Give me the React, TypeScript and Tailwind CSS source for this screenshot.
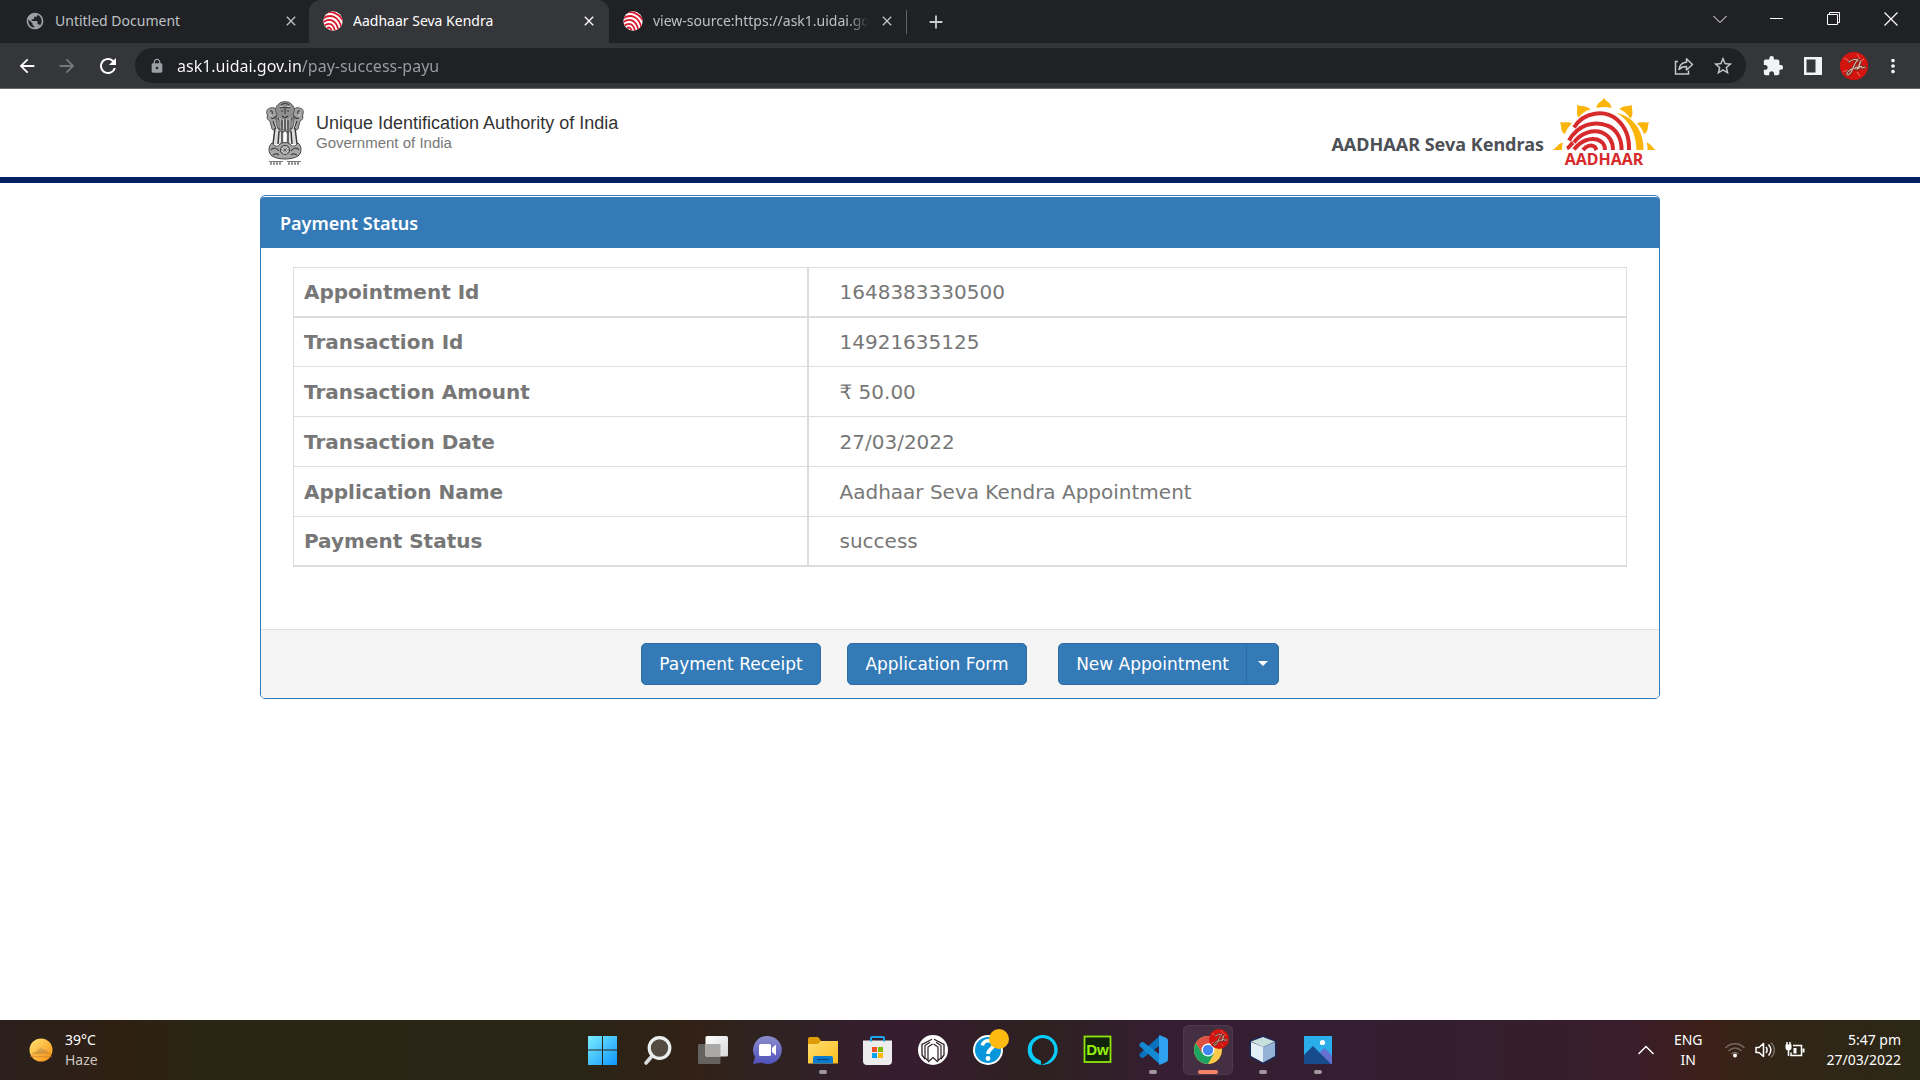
import type { ReactNode } from "react";
import {
  MdAdd,
  MdArrowBack,
  MdArrowForward,
  MdClose,
  MdExtension,
  MdLock,
  MdMoreVert,
  MdPublic,
  MdRefresh,
  MdStarBorder,
} from "react-icons/md";

function AadhaarFavicon() {
  return (
    <svg viewBox="0 0 20 20" className="size-5 shrink-0" aria-hidden="true">
      <defs>
        <clipPath id="fav-clip">
          <circle cx="10" cy="10" r="9.7" />
        </clipPath>
      </defs>
      <g clipPath="url(#fav-clip)">
        <rect width="20" height="20" fill="#fff" />
        <g fill="none" stroke="#d9172b" strokeWidth="1.8">
          <path d="M0 3.5C8-2 18 3 21 12" />
          <path d="M0 7.5C8 2 16 6 18.5 17" />
          <path d="M0 11.2C7 6.5 13 9 15.5 19" />
          <path d="M1.500 14.500C6 11 10.500 13 12 20" />
          <path d="M4 17.500C6 15.500 8 16.500 8.800 20" />
        </g>
      </g>
    </svg>
  );
}

function Tab({ icon, title, active = false, wide = true }: { icon: ReactNode; title: string; active?: boolean; wide?: boolean }) {
  return (
    <div
      className={
        "flex h-full items-center rounded-t-xl pb-0.5 pl-3.5 " +
        (active ? "bg-[#35363a] text-white " : "bg-[#202124] text-[#bdc1c6] ") +
        (wide ? "w-[300px] pr-3" : "w-[290px] pr-1")
      }
    >
      {icon}
      <button
        className={
          "ml-2.5 min-w-0 flex-1 overflow-hidden text-left text-[14px] leading-5 whitespace-nowrap " +
          (wide ? "" : "[mask-image:linear-gradient(to_right,black_90%,transparent)]")
        }
      >
        {title}
      </button>
      <button aria-label={"Close " + title} className="ml-2.5 shrink-0">
        <MdClose className="size-4" />
      </button>
    </div>
  );
}

function BrowserChrome() {
  return (
    <div className="shrink-0 font-['Noto_Sans',sans-serif]">
      <div className="flex h-[43px] justify-between bg-[#35363a]">
        <div className="flex">
          <div className="flex rounded-br-xl bg-[#202124] pl-[11px]">
            <div className="w-[298px]">
              <Tab icon={<MdPublic className="size-5 shrink-0 text-[#9aa0a6]" />} title="Untitled Document" />
            </div>
          </div>
          <div className="bg-[#202124]">
            <div className="h-full w-[300px] rounded-t-xl bg-[#35363a]">
              <Tab icon={<AadhaarFavicon />} title="Aadhaar Seva Kendra" active />
            </div>
          </div>
        </div>
        <div className="flex flex-1 items-center justify-between rounded-bl-xl bg-[#202124]">
          <div className="flex h-full items-center">
            <Tab icon={<AadhaarFavicon />} title="view-source:https://ask1.uidai.gov" wide={false} />
            <span className="ml-[7px] h-6 w-px bg-[#5f6368]" />
            <button aria-label="New tab" className="ml-[18px] text-[#c8cacd]">
              <MdAdd className="size-[22px]" />
            </button>
          </div>
          <div className="flex items-center gap-[43px] pr-[22px] pb-1.5 text-white">
            <button aria-label="Search tabs">
              <svg viewBox="0 0 14 14" className="size-3.5" fill="none" stroke="currentColor">
                <path d="M.5 4 7 10.500 13.500 4" />
              </svg>
            </button>
            <button aria-label="Minimize">
              <svg viewBox="0 0 14 14" className="size-3.5" fill="none" stroke="currentColor">
                <path d="M0 6.500h13" />
              </svg>
            </button>
            <button aria-label="Restore">
              <svg viewBox="0 0 14 14" className="size-3.5" fill="none" stroke="currentColor">
                <path d="M.5 2.500h10v10H.5zM2.500 2.500v-2h10v10h-2" />
              </svg>
            </button>
            <button aria-label="Close window">
              <svg viewBox="0 0 14 14" className="size-3.5" fill="none" stroke="currentColor" strokeWidth="1.200">
                <path d="M.5.500l13 13M13.500.500l-13 13" />
              </svg>
            </button>
          </div>
        </div>
      </div>
      <div className="flex h-[46px] items-center border-b border-[#66676a] bg-[#35363a] pr-4 pl-4">
        <button aria-label="Back" className="text-white">
          <MdArrowBack className="size-[22px]" />
        </button>
        <button aria-label="Forward" className="ml-[18px] text-[#77787c]">
          <MdArrowForward className="size-[22px]" />
        </button>
        <button aria-label="Reload" className="ml-[18px] text-white">
          <MdRefresh className="size-6" />
        </button>
        <div className="ml-[15px] flex h-[35px] flex-1 items-center rounded-full bg-[#202124] pr-3 pl-[14px]">
          <MdLock className="size-4 text-[#9aa0a6]" />
          <input
            aria-label="Address"
            defaultValue="ask1.uidai.gov.in/pay-success-payu"
            className="ml-3 min-w-0 flex-1 bg-[linear-gradient(to_right,white_125px,#9aa0a6_125px)] bg-clip-text text-[16px] leading-6 text-transparent outline-none"
          />
          <button aria-label="Share" className="text-[#c4c7c5]">
            <svg viewBox="0 0 20 20" className="size-5" fill="none" stroke="currentColor" strokeWidth="1.500">
              <path d="M4 5.500H1.500v12.500h13v-3.500" />
              <path d="M5 13.500c.6-4.500 3.400-7 7.500-7.200V2.800l6 5.700-6 5.500v-3.400c-3.200 0-5.600.8-7.500 2.900z" strokeLinejoin="round" />
            </svg>
          </button>
          <button aria-label="Bookmark" className="ml-[18px] text-[#c4c7c5]">
            <MdStarBorder className="size-[22px]" />
          </button>
        </div>
        <button aria-label="Extensions" className="ml-4 text-[#f1f3f4]">
          <MdExtension className="size-[22px]" />
        </button>
        <button aria-label="Side panel" className="ml-5 text-[#f1f3f4]">
          <svg viewBox="0 0 18 18" className="size-[18px]">
            <path fill="currentColor" fillRule="evenodd" d="M0 0h18v18H0zM2.500 2.500v13h9v-13z" />
          </svg>
        </button>
        <button aria-label="Profile" className="ml-[18px]">
          <Avatar className="size-7" />
        </button>
        <button aria-label="Menu" className="ml-[14px] text-[#f1f3f4]">
          <MdMoreVert className="size-[22px]" />
        </button>
      </div>
    </div>
  );
}

function Avatar({ className }: { className: string }) {
  return (
    <svg viewBox="0 0 28 28" className={className} aria-hidden="true">
      <circle cx="14" cy="14" r="14" fill="#d4140f" />
      <g stroke="#f08078" strokeWidth="1.200" opacity=".7">
        <path d="M4 6l5 3M17 2l3 5M24 7l-5 3M3 20l5-2M20 24l-3-4M26 16l-5-1" />
      </g>
      <g fill="none" stroke="#5d2a22" strokeWidth="2.600" strokeLinecap="round">
        <path d="M9 10c3-3 7-3 9-2-5 3-5 14-10 15-3 0 0-5 6-7" />
        <path d="M15 17c1-3 3-2 2 0 1 1 2-6 4-8-2 4-2 7-2 7 2-3 3-1 3 0l3-1" />
      </g>
      <g fill="none" stroke="#e0b7a6" strokeWidth="1.100" strokeLinecap="round">
        <path d="M9 10c3-3 7-3 9-2-5 3-5 14-10 15-3 0 0-5 6-7" />
        <path d="M15 17c1-3 3-2 2 0 1 1 2-6 4-8-2 4-2 7-2 7 2-3 3-1 3 0l3-1" />
      </g>
    </svg>
  );
}

function Emblem() {
  return (
    <svg viewBox="0 0 38 66" className="h-[66px] w-[38px] shrink-0" aria-label="State emblem of India" role="img">
      <g fill="#a2a2a2" stroke="#555" strokeWidth="1">
        <path d="M5 8C1 8-.5 12 1.500 15c-1 3 0 5 2.500 6l2 8 5 3 3-14-3-8C9 8 7 7 5 8z" />
        <path d="M33 8c4 0 5.500 4 3.500 7 1 3 0 5-2.500 6l-2 8-5 3-3-14 3-8c2-2 4-3 6-2z" />
        <path d="M9 20h20l2 24H7z" fill="#dedede" stroke="none" />
        <path d="M13 4c1-3 11-3 12 0 4 2 4 8 2 10 2 5 1 12-2 16-3 3-9 3-12 0-3-4-4-11-2-16-2-2-2-8 2-10z" fill="#8f8f8f" />
      </g>
      <g fill="none" stroke="#3a3a3a" strokeWidth="1.100">
        <path d="M14 8c2-2 3 0 5 0s3-2 5 0M15 11h2M21 11h2M19 9v5M16 16c2 2 4 2 6 0M15 5c2-2 6-2 8 0" />
        <path d="M12 18c2 3 2 8 1 11M16 20v10M19 19v12M22 20v10M26 18c-2 3-2 8-1 11" />
        <path d="M4 11c2-1 3 1 2 3M34 11c-2-1-3 1-2 3M5 18c2 1 4 0 5-2M33 18c-2 1-4 0-5-2M7 21l3 8M31 21l-3 8" />
        <path d="M9 28l-2 16M13 31l-1 13M16 31v13M22 31v13M25 31l1 13M29 28l2 16" strokeWidth="1.500" />
      </g>
      <g fill="none" stroke="#d4d4d4" strokeWidth=".9">
        <path d="M14 18v10M17.500 19v10M20.500 19v10M24 18v10M14 6.500h3M21 6.500h3M3 14l3 2M35 14l-3 2" />
      </g>
      <path d="M18 32h2v11h-2z" fill="#fff" />
      <path d="M6 43c-4 3-4 10 0 13 6 4 20 4 26 0 4-3 4-10 0-13-3 4-6 4-8 1-3-2-7-2-10 0-2 3-5 3-8-1z" fill="#a6a6a6" stroke="#444" strokeWidth="1" />
      <g fill="none" stroke="#444" strokeWidth="1.200">
        <circle cx="19" cy="50" r="4.500" fill="#dadada" />
        <path d="M19 46v8M15 50h8M16 47l6 6M22 47l-6 6" strokeWidth=".6" />
        <path d="M5 50c2-3 6-2 8 1M33 50c-2-3-6-2-8 1M7 55c3-2 5-1 6 0M31 55c-3-2-5-1-6 0" />
      </g>
      <path d="M3 61.500h14M21 61.500h14" stroke="#666" strokeWidth=".9" />
      <path d="M4 63.500h12M22 63.500h12" stroke="#888" strokeWidth="2.500" strokeDasharray="2 1" />
    </svg>
  );
}

function AadhaarLogo() {
  return (
    <svg viewBox="0 0 104 68" className="h-[68px] w-[104px] shrink-0 overflow-visible" aria-label="Aadhaar" role="img">
      <g fill="#fbb40a">
        <path d="M52 -1c2 4 7 4 7.500 10-5-1.500-10-1.500-15 0C45 3 50 3 52 -1z" />
        <path d="M25 6c5 2 9 0 13.500 4.500-5 1-9 4-12 8C23.500 14 26 11 25 6z" />
        <path d="M80 6c-5 2-8 0-12.500 4 4 2 8 5 11 9.500C82.500 14 79 11 80 6z" />
        <path d="M8 23c5 1.500 7-1 12 1.500-3.500 3-5.500 6-7 10.500C8 32.500 10 28 8 23z" />
        <path d="M97 23c-5 1.500-7-1-12 1.500 3.500 3 5.500 6 7 10.500 5-2.500 3-7 5-12z" />
        <path d="M0 51c5-1.500 5-6 11-7.500-1 2.500-1 5-1 7.500z" />
        <path d="M104 51c-4-2-4-6-9.500-7.500 1 2.500 1 5 1 7.500z" />
        <path d="M65 14c16 3 27 18 26.500 37h-7C84 35 78 22 65 14z" />
      </g>
      <g fill="none" stroke="#d62a2c" strokeWidth="4">
        <path d="M22 28.500c10-16 31-18 43-8 8 7 12.500 18 12 30.500" />
        <path d="M17 41.500c9-16 25-20 38-15 9 3 15 13 14.500 24.500" />
        <path d="M22 43.500c7-10 19-13 28-10 7 3 11 9 11 17.500" />
        <path d="M15 49.500c2-1 4-4 6-6M22 50.500c7-9 16-12 23-10 6 2 8 5 8 10.500" />
        <path d="M31 51c3-4 8-6 12-3l1.500 3" />
      </g>
      <text x="52" y="66" textAnchor="middle" className="fill-[#d62a2c] font-['Noto_Sans',sans-serif] text-[16px] font-bold">
        AADHAAR
      </text>
    </svg>
  );
}

const details = [
  { label: "Appointment Id", value: "1648383330500" },
  { label: "Transaction Id", value: "14921635125" },
  { label: "Transaction Amount", value: "₹ 50.00" },
  { label: "Transaction Date", value: "27/03/2022" },
  { label: "Application Name", value: "Aadhaar Seva Kendra Appointment" },
  { label: "Payment Status", value: "success" },
];

function rowClass(i: number) {
  if (i === 0) return "h-[49px] border-b-2 border-[#ddd]";
  if (i === details.length - 1) return "h-[49px]";
  return "h-[50px] border-b border-[#ddd]";
}

function PaymentPage() {
  return (
    <div className="flex-1 bg-white">
      <header className="border-b-[6px] border-[#001f60]">
        <div className="mx-auto flex h-[88px] w-full max-w-[1400px] items-center justify-between pr-1 pl-1.5">
          <div className="flex items-center gap-3">
            <Emblem />
            <div className="font-['Liberation_Sans',Arial,sans-serif]">
              <p className="text-[18px] leading-5 text-[#333]">Unique Identification Authority of India</p>
              <p className="text-[15px] leading-5 text-[#777]">Government of India</p>
            </div>
          </div>
          <div className="flex items-center gap-2">
            <p className="pt-[22px] font-['Noto_Sans',sans-serif] text-[18px] leading-6 font-bold text-[#4d5056]">AADHAAR Seva Kendras</p>
            <AadhaarLogo />
          </div>
        </div>
      </header>
      <main className="mx-auto mt-3 w-full max-w-[1400px] rounded-[5px] border border-[#337ab7]">
        <div className="pt-px">
          <h1 className="rounded-t-[3px] bg-[#337ab7] px-[19px] pt-[13px] pb-[11px] font-['Noto_Sans',sans-serif] text-[18px] leading-[27px] font-semibold text-white">
            Payment Status
          </h1>
        </div>
        <div className="px-8 pt-[19px] pb-[62px]">
          <table className="w-full border-collapse border border-b-2 border-[#ddd] font-['DejaVu_Sans',Verdana,sans-serif] text-[20px] leading-7 text-[#777]">
            <tbody>
              {details.map((row, i) => (
                <tr key={row.label} className={rowClass(i)}>
                  <th scope="row" className="w-[514px] border-r-2 border-[#ddd] px-2.5 text-left font-bold">
                    {row.label}
                  </th>
                  <td className="px-[31px]">{row.value}</td>
                </tr>
              ))}
            </tbody>
          </table>
        </div>
        <div className="flex items-center justify-center rounded-b-[4px] border-t border-[#ddd] bg-[#f5f5f5] py-[13px] font-['DejaVu_Sans',Verdana,sans-serif] text-[17px] leading-6 text-white">
          <button className="h-[42px] min-w-[180px] rounded-[5px] border border-[#2e6da4] bg-[#337ab7] px-[15px]">Payment Receipt</button>
          <button className="ml-[26px] h-[42px] min-w-[180px] rounded-[5px] border border-[#2e6da4] bg-[#337ab7] px-[15px]">Application Form</button>
          <div className="ml-[31px] flex">
            <button className="h-[42px] min-w-[189px] rounded-l-[5px] border border-[#2e6da4] bg-[#337ab7] px-[15px]">New Appointment</button>
            <button
              aria-label="More appointment options"
              className="-ml-px flex h-[42px] w-[33px] items-center justify-center rounded-r-[5px] border border-[#2e6da4] bg-[#337ab7]"
            >
              <svg viewBox="0 0 10 5" className="h-[5px] w-2.5">
                <path d="M0 0h10L5 5z" fill="currentColor" />
              </svg>
            </button>
          </div>
        </div>
      </main>
    </div>
  );
}

const Icon = ({ children }: { children: ReactNode }) => (
  <svg viewBox="0 0 30 30" className="size-[30px] overflow-visible" aria-hidden="true">
    {children}
  </svg>
);

const apps: { name: string; state?: "open" | "active"; icon: ReactNode }[] = [
  {
    name: "Start",
    icon: (
      <Icon>
        <defs>
          <linearGradient id="win" x1="0" y1="0" x2="30" y2="30" gradientUnits="userSpaceOnUse">
            <stop stopColor="#7eefff" />
            <stop offset="1" stopColor="#0a94fb" />
          </linearGradient>
        </defs>
        <path fill="url(#win)" d="M0 1h14v13.500H0zM15 1h14v13.500H15zM0 15.500h14V30H0zM15 15.500h14V30H15z" />
      </Icon>
    ),
  },
  {
    name: "Search",
    icon: (
      <Icon>
        <path d="M9.500 20.500 3 28" stroke="#d8dcde" strokeWidth="3.600" strokeLinecap="round" />
        <circle cx="16.500" cy="13" r="10.300" fill="#554c41" stroke="#eceff0" strokeWidth="3.200" />
      </Icon>
    ),
  },
  {
    name: "Task view",
    icon: (
      <Icon>
        <defs>
          <linearGradient id="tv" x1="0" y1="0" x2="1" y2="1">
            <stop stopColor="#fff" />
            <stop offset="1" stopColor="#d7d7d7" />
          </linearGradient>
        </defs>
        <rect x="0" y="9" width="22.500" height="20" rx="1.500" fill="#656361" />
        <rect x="7.500" y="1" width="22.500" height="20.500" rx="1.500" fill="url(#tv)" />
        <path d="M7.500 9h15v12.500h-15z" fill="#a9a8a7" />
      </Icon>
    ),
  },
  {
    name: "Chat",
    icon: (
      <Icon>
        <defs>
          <linearGradient id="chat" x1="0" y1="0" x2="0" y2="1">
            <stop stopColor="#8b8ccb" />
            <stop offset="1" stopColor="#5052bb" />
          </linearGradient>
        </defs>
        <path fill="url(#chat)" d="M15 1a14 14 0 1 1-6.500 26.500L0 29l2-7A14 14 0 0 1 15 1z" />
        <rect x="6" y="9" width="12" height="12" rx="1.500" fill="#fff" />
        <path d="M19 13l4-3.500v11l-4-3.500z" fill="#fff" />
      </Icon>
    ),
  },
  {
    name: "File Explorer",
    state: "open",
    icon: (
      <Icon>
        <defs>
          <linearGradient id="fe" x1="0" y1="0" x2="1" y2="1">
            <stop stopColor="#ffdf70" />
            <stop offset="1" stopColor="#fdbc1f" />
          </linearGradient>
        </defs>
        <path d="M0 4a2 2 0 0 1 2-2h8l3 3.500V12H0z" fill="#e09d0a" />
        <path d="M0 9h10l3-3h17v22.500H0z" fill="url(#fe)" />
        <path d="M5 28.500V23a2 2 0 0 1 2-2h16a2 2 0 0 1 2 2v5.500z" fill="#0b7bd0" />
        <path d="M9 24.500h12" stroke="#06477f" strokeWidth="1.200" />
      </Icon>
    ),
  },
  {
    name: "Microsoft Store",
    icon: (
      <Icon>
        <path d="M0 5.500h29V26a4 4 0 0 1-4 4H4a4 4 0 0 1-4-4z" fill="#ececec" />
        <path d="M8 6.500V3a1 1 0 0 1 1-1h11a1 1 0 0 1 1 1v3.500" fill="none" stroke="#1aa5ec" strokeWidth="2" />
        <path d="M9 12h5v5H9z" fill="#f25022" />
        <path d="M15 12h5v5h-5z" fill="#7fba00" />
        <path d="M9 18h5v5H9z" fill="#00a4ef" />
        <path d="M15 18h5v5h-5z" fill="#ffb900" />
      </Icon>
    ),
  },
  {
    name: "Home app",
    icon: (
      <Icon>
        <circle cx="15" cy="15" r="15" fill="#fff" />
        <g fill="none" stroke="#2d2024" strokeWidth="1.300">
          <path d="M14 4.200 4 9.500V20l3 4M16 4.200l10 5.300V20l-3 4" />
        </g>
        <path d="M12 7.200 7 10.500V23l3 2.500V12L14.500 9M18 7.200l5 3.300V23l-3 2.500V12L15.500 9" fill="none" stroke="#2d2024" strokeWidth="1.200" />
        <path d="M10 27l5-4.500 5 4.500" fill="none" stroke="#2d2024" strokeWidth="1.200" />
      </Icon>
    ),
  },
  {
    name: "Help",
    icon: (
      <Icon>
        <circle cx="15" cy="15" r="14" fill="#0796d9" stroke="#fff" strokeWidth="2" />
        <path d="M9.500 10.500c.5-6.500 11.500-6 11-.5-.3 4-5.500 4-5.500 9" fill="none" stroke="#fff" strokeWidth="3.600" />
        <circle cx="15" cy="23.500" r="2.400" fill="#fff" />
        <circle cx="26" cy="4" r="10" fill="#fdbb11" />
      </Icon>
    ),
  },
  {
    name: "Alexa",
    icon: (
      <Icon>
        <path
          fill="#0accf9"
          fillRule="evenodd"
          d="M15 0a15 15 0 0 0-2 29.900v-3c0-.9-.5-1.500-1.400-1.800A11.300 11.300 0 1 1 26.300 15C26.300 23 18 29 13 29.900A15 15 0 1 0 15 0z"
        />
      </Icon>
    ),
  },
  {
    name: "Dreamweaver",
    icon: (
      <Icon>
        <rect x="1.500" y="1.500" width="26" height="25.500" fill="#12250c" stroke="#8ee60b" strokeWidth="1.800" />
        <text x="14.500" y="19.500" textAnchor="middle" className="fill-[#96f20c] font-['Liberation_Sans',sans-serif] text-[15px] font-bold">
          Dw
        </text>
      </Icon>
    ),
  },
  {
    name: "Visual Studio Code",
    state: "open",
    icon: (
      <Icon>
        <path d="M22 0.500 2 18.500q-1.500 1.500 0 3l1.500 1.300q1 .6 2 0L23 9.500z" fill="#0b72bd" />
        <path d="M22 29.500 2 11.500q-1.500-1.500 0-3l1.500-1.300q1-.6 2 0L23 20.500z" fill="#1389d2" />
        <path d="M22 .2 28.500 3Q30 4 30 5.500v19q0 1.500-1.500 2.500L22 29.800q-1 .2-1-.8V1q0-1 1-.8z" fill="#2fa1ee" />
      </Icon>
    ),
  },
  {
    name: "Google Chrome",
    state: "active",
    icon: (
      <Icon>
        <circle cx="15" cy="15" r="14" fill="#fdc94b" />
        <path d="M2.900 8A14 14 0 0 1 27.100 8L15 8.500l-6 10z" fill="#dd5144" />
        <path d="M2.900 8A14 14 0 0 0 15 29l6-10.500-12-.5z" fill="#1da462" />
        <circle cx="15" cy="15" r="6.500" fill="#fff" />
        <circle cx="15" cy="15" r="5.200" fill="#4285f4" />
        <svg x="16" y="-6" width="20" height="20">
          <Avatar className="size-5" />
        </svg>
      </Icon>
    ),
  },
  {
    name: "NetBeans",
    state: "open",
    icon: (
      <Icon>
        <path d="M15 1.500 27.500 7v14L15 28 2.500 21V7z" fill="#1e2c60" stroke="#1d2753" strokeWidth="2.500" strokeLinejoin="round" />
        <path d="M15 2 27 6.500 15 12 3 6.500z" fill="#c8e0dc" />
        <path d="M3 7l12 5v15.500L3 21z" fill="#e2edf6" />
        <path d="M27 7l-12 5v15.500L27 21z" fill="#94b2d6" />
      </Icon>
    ),
  },
  {
    name: "Photos",
    state: "open",
    icon: (
      <Icon>
        <path d="M1 1h28v28H1z" fill="#2badea" />
        <path d="M11 23 21.500 13 29 20.500V29H11z" fill="#6571d1" />
        <path d="M1 20 10 11l18 18H1z" fill="#174b8c" />
        <circle cx="19.500" cy="7.500" r="2.600" fill="#fff" />
      </Icon>
    ),
  },
];

function Taskbar() {
  return (
    <footer className="grid h-[60px] shrink-0 grid-cols-[1fr_auto_1fr] items-center bg-[linear-gradient(to_right,#2b201d_0%,#2f2013_6%,#2a2414_10%,#2a2416_31%,#322116_36%,#2e2322_40%,#371c30_47%,#2d2120_54%,#361e33_61%,#331e30_75%,#3a1d2a_85%,#3c2018_89%,#302617_93%,#2c2716_100%)] font-['Noto_Sans',sans-serif] text-[14px] leading-5 text-white">
      <button className="flex items-center gap-[11px] justify-self-start pl-[29px] text-left">
        <svg viewBox="0 0 25 24" className="h-6 w-[25px]" aria-hidden="true">
          <defs>
            <linearGradient id="sun" x1="0" y1="0" x2="1" y2="1">
              <stop stopColor="#ffe574" />
              <stop offset="1" stopColor="#fb8f10" />
            </linearGradient>
          </defs>
          <circle cx="12" cy="12" r="11.500" fill="url(#sun)" />
          <path d="M5 15c2-1 4-3 6-5l3 1 3 1 3 3z" fill="#b08349" opacity=".5" />
          <path d="M3 15.500h19M1 18.500h22" stroke="#c47c25" strokeWidth="1.500" opacity=".5" />
        </svg>
        <span className="block">
          <span className="block">39°C</span>
          <span className="block text-[#cbc6c0]">Haze</span>
        </span>
      </button>
      <nav aria-label="Taskbar" className="flex gap-[5px]">
        {apps.map((app) => (
          <button
            key={app.name}
            aria-label={app.name}
            className={
              "relative flex size-[50px] items-center justify-center rounded-md " +
              (app.state === "active" ? "border border-white/5 bg-white/8" : "")
            }
          >
            {app.icon}
            {app.state === "open" && <span className="absolute bottom-px h-1 w-2 rounded-full bg-[#a09aa0]" />}
            {app.state === "active" && <span className="absolute bottom-0 h-1 w-5 rounded-full bg-[#f48465]" />}
          </button>
        ))}
      </nav>
      <div className="flex items-center justify-self-end pr-[19px]">
        <button aria-label="Show hidden icons">
          <svg viewBox="0 0 16 10" className="h-2.5 w-4" fill="none" stroke="currentColor" strokeWidth="1.500">
            <path d="M.5 9 8 1.500 15.500 9" />
          </svg>
        </button>
        <button className="ml-5 text-center">
          <span className="block">ENG</span>
          <span className="block">IN</span>
        </button>
        <button aria-label="Network, volume and battery" className="ml-[22px] flex items-center gap-2.5">
          <svg viewBox="0 0 20 16" className="h-4 w-5" fill="none" stroke="#746a5f" strokeWidth="1.400">
            <path d="M.5 6C6 .3 14 .3 19.500 6M3.500 9c4-4 9-4 13 0M6.500 12c2-2 5-2 7 0" />
            <circle cx="10" cy="13.500" r="2" fill="#fff" stroke="none" />
          </svg>
          <svg viewBox="0 0 20 18" className="h-[18px] w-5" fill="none" stroke="#fff" strokeWidth="1.500">
            <path d="M1 6.500h3l4.500-4v13l-4.500-4H1z" strokeLinejoin="round" />
            <path d="M11 6c1.500 2 1.500 4 0 6M13.500 3.500c3 3.500 3 7.500 0 11" />
            <path d="M16 1.500c4.500 4.500 4.500 10.500 0 15" stroke="#746a5f" />
          </svg>
          <svg viewBox="0 0 20 18" className="h-[18px] w-5" fill="none" stroke="#fff" strokeWidth="1.500">
            <path d="M8 4.500h8.500v10H6v-3" />
            <path d="M18.500 7.500v4" strokeWidth="2" />
            <path d="M8.500 7h3v5.500h-3z" fill="#fff" stroke="none" />
            <path d="M.5 3.500h6v3a3 3 0 0 1-6 0z" fill="#fff" stroke="none" />
            <path d="M2 1v3M5 1v3M3.500 8v7" />
          </svg>
        </button>
        <button className="ml-[22px] text-right">
          <span className="block">5:47 pm</span>
          <span className="block">27/03/2022</span>
        </button>
      </div>
    </footer>
  );
}

export default function App() {
  return (
    <div className="flex min-h-screen flex-col bg-white">
      <BrowserChrome />
      <PaymentPage />
      <Taskbar />
    </div>
  );
}
